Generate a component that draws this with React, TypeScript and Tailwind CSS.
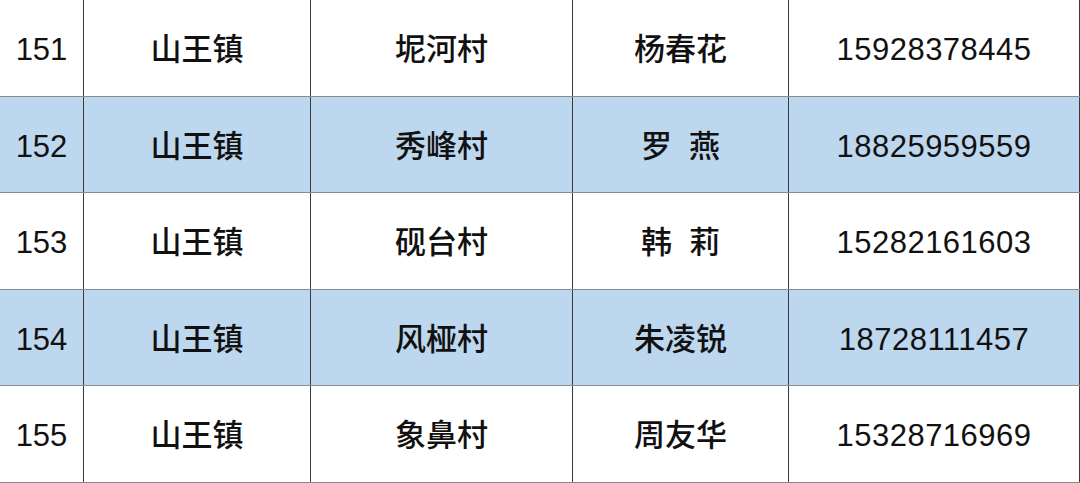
const rows = [
  { no: '151', town: '山王镇', village: '坭河村', name: '杨春花', phone: '15928378445' },
  { no: '152', town: '山王镇', village: '秀峰村', name: '罗  燕', phone: '18825959559' },
  { no: '153', town: '山王镇', village: '砚台村', name: '韩  莉', phone: '15282161603' },
  { no: '154', town: '山王镇', village: '风桠村', name: '朱凌锐', phone: '18728111457' },
  { no: '155', town: '山王镇', village: '象鼻村', name: '周友华', phone: '15328716969' },
];

const cell = 'flex items-center justify-center pt-[5px] border-r border-r-[#3c3c3c] whitespace-pre';

export default function App() {
  return (
    <div
      className="w-[1080px] h-[483px] bg-white text-[#111] text-[31px] font-medium overflow-hidden"
      style={{ fontFamily: '"Liberation Sans", "Noto Sans CJK SC", sans-serif' }}
    >
      {rows.map((r, i) => (
        <div
          key={r.no}
          className={`grid grid-cols-[84px_227px_262px_216px_1fr] h-[96.6px] border-b border-b-[#8c8c8c] ${
            i % 2 === 1 ? 'bg-[#bdd7ee]' : 'bg-white'
          }`}
        >
          <div className={cell}>{r.no}</div>
          <div className={cell}>{r.town}</div>
          <div className={cell}>{r.village}</div>
          <div className={cell}>{r.name}</div>
          <div className={`${cell} tracking-[0.5px]`}>{r.phone}</div>
        </div>
      ))}
    </div>
  );
}
